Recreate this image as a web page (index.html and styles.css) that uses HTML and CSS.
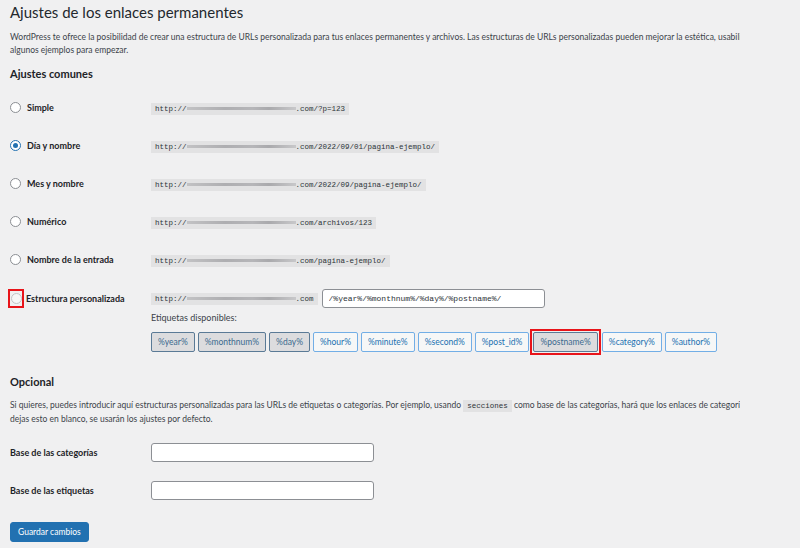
FILE: index.html
```html
<!DOCTYPE html>
<html lang="es">
<head>
    <meta charset="UTF-8">
    <title>Ajustes de los enlaces permanentes</title>
    <link rel="stylesheet" href="styles.css">
</head>
<body>
    <div class="wrap">
        <h1>Ajustes de los enlaces permanentes</h1>
        <p class="desc">WordPress te ofrece la posibilidad de crear una estructura de URLs personalizada para tus enlaces permanentes y archivos. Las estructuras de URLs personalizadas pueden mejorar la estética, usabilidad y compatibilidad<br>algunos ejemplos para empezar.</p>

        <h2>Ajustes comunes</h2>
        <table class="form-table">
            <tr>
                <th><label><span class="radio"></span>Simple</label></th>
                <td><code>http://<span class="blur"></span>.com/?p=123</code></td>
            </tr>
            <tr>
                <th><label><span class="radio checked"></span>Día y nombre</label></th>
                <td><code>http://<span class="blur"></span>.com/2022/09/01/pagina-ejemplo/</code></td>
            </tr>
            <tr>
                <th><label><span class="radio"></span>Mes y nombre</label></th>
                <td><code>http://<span class="blur"></span>.com/2022/09/pagina-ejemplo/</code></td>
            </tr>
            <tr>
                <th><label><span class="radio"></span>Numérico</label></th>
                <td><code>http://<span class="blur"></span>.com/archivos/123</code></td>
            </tr>
            <tr>
                <th><label><span class="radio"></span>Nombre de la entrada</label></th>
                <td><code>http://<span class="blur"></span>.com/pagina-ejemplo/</code></td>
            </tr>
            <tr class="custom">
                <th><label><span class="mark radio-mark"><span class="radio faded"></span></span>Estructura personalizada</label></th>
                <td>
                    <div class="custom-line">
                        <code>http://<span class="blur"></span>.com</code>
                        <input type="text" class="regular-text" value="/%year%/%monthnum%/%day%/%postname%/">
                    </div>
                    <div class="tags-label">Etiquetas disponibles:</div>
                    <div class="tags">
                        <button class="tag active">%year%</button>
                        <button class="tag active">%monthnum%</button>
                        <button class="tag active">%day%</button>
                        <button class="tag">%hour%</button>
                        <button class="tag">%minute%</button>
                        <button class="tag">%second%</button>
                        <button class="tag">%post_id%</button>
                        <span class="mark tag-mark"><button class="tag active">%postname%</button></span>
                        <button class="tag">%category%</button>
                        <button class="tag">%author%</button>
                    </div>
                </td>
            </tr>
        </table>

        <h2 class="optional">Opcional</h2>
        <p class="desc">Si quieres, puedes introducir aquí estructuras personalizadas para las URLs de etiquetas o categorías. Por ejemplo, usando <code>secciones</code> como base de las categorías, hará que los enlaces de categorías sean<br>dejas esto en blanco, se usarán los ajustes por defecto.</p>

        <table class="form-table bases">
            <tr>
                <th>Base de las categorías</th>
                <td><input type="text" class="regular-text"></td>
            </tr>
            <tr>
                <th>Base de las etiquetas</th>
                <td><input type="text" class="regular-text"></td>
            </tr>
        </table>

        <button class="button-primary">Guardar cambios</button>
    </div>
</body>
</html>
```

FILE: styles.css
```css
body {
    margin: 0;
    background-color: #f0f0f1;
    color: #1d2327;
    font-family: Lato, sans-serif;
    font-size: 9px;
}
.wrap {
    width: 730px;
    padding-left: 10px;
    overflow: hidden;
}
h1 {
    font-size: 15px;
    font-weight: 400;
    margin: 0;
    padding-top: 1px;
    line-height: 22px;
    color: #23282d;
}
.desc {
    margin: 8px 0 0;
    font-size: 8.5px;
    line-height: 13px;
    color: #3c434a;
    white-space: nowrap;
}
h2 {
    font-size: 11px;
    font-weight: 700;
    margin: 9px 0 0;
    line-height: 16px;
}
.form-table {
    border-collapse: collapse;
    margin-top: 6px;
}
.form-table th {
    width: 141px;
    padding: 0;
    text-align: left;
    font-weight: 700;
    height: 38px;
}
.form-table td {
    padding: 0;
}
.form-table label {
    display: flex;
    align-items: center;
}
.radio {
    display: block;
    width: 9px;
    height: 9px;
    border: 1px solid #8c8f94;
    border-radius: 50%;
    background-color: #fff;
    margin-right: 6px;
    position: relative;
}
.radio.checked {
    border-color: #2271b1;
}
.radio.checked::after {
    content: "";
    position: absolute;
    left: 2px;
    top: 2px;
    width: 5px;
    height: 5px;
    border-radius: 50%;
    background-color: #2271b1;
}
.mark {
    border: 2px solid #e8141a;
}
.radio-mark {
    display: block;
    width: 12px;
    padding: 2px 0;
    margin-left: -2px;
    margin-right: 2px;
}
.radio.faded {
    margin: 0 0 0 1px;
    border-color: #c3c4c7;
    background-color: #f6f7f7;
}
code {
    font-family: "Liberation Mono", monospace;
    font-size: 7.5px;
    background-color: #e2e2e3;
    padding: 2px 4px;
    color: #2c3338;
}
.blur {
    display: inline-block;
    width: 109px;
    height: 3px;
    vertical-align: middle;
    background: linear-gradient(90deg, #c2c2c4, #aeaeb1 35%, #b6b6b9 60%, #a9a9ac 75%, #c8c8ca);
    filter: blur(0.5px);
}
.custom th {
    vertical-align: top;
    padding-top: 11px;
    height: auto;
}
.custom label {
    height: 19px;
}
.custom td {
    padding-top: 11px;
}
.custom-line {
    display: flex;
    align-items: center;
    gap: 4px;
}
.regular-text {
    width: 223px;
    height: 19px;
    box-sizing: border-box;
    border: 1px solid #8c8f94;
    border-radius: 3px;
    background-color: #fff;
    font-family: "Liberation Mono", monospace;
    font-size: 8px;
    color: #2c3338;
    padding: 0 6px;
}
.tags-label {
    margin-top: 3px;
    line-height: 14px;
    color: #3c434a;
}
.tags {
    display: flex;
    align-items: center;
    gap: 3px;
    margin-top: 7px;
}
.tag {
    height: 20px;
    padding: 0 6px;
    font-family: Lato, sans-serif;
    font-size: 8.5px;
    color: #2271b1;
    background-color: #f6f7f7;
    border: 1px solid #72aee6;
    border-radius: 2px;
}
.tag.active {
    background-color: #dcdcde;
    border-color: #5a7a96;
    color: #3b6a8e;
}
.tag-mark {
    padding: 1px;
    margin: -3px -2px;
}
.optional {
    margin-top: 22px;
}
.optional + .desc {
    margin-top: 9px;
}
.bases {
    margin-top: 7px;
}
.button-primary {
    margin-top: 13px;
    height: 20px;
    padding: 0 7px;
    font-family: Lato, sans-serif;
    font-size: 8.5px;
    color: #fff;
    background-color: #2271b1;
    border: 1px solid #2271b1;
    border-radius: 3px;
}
```
